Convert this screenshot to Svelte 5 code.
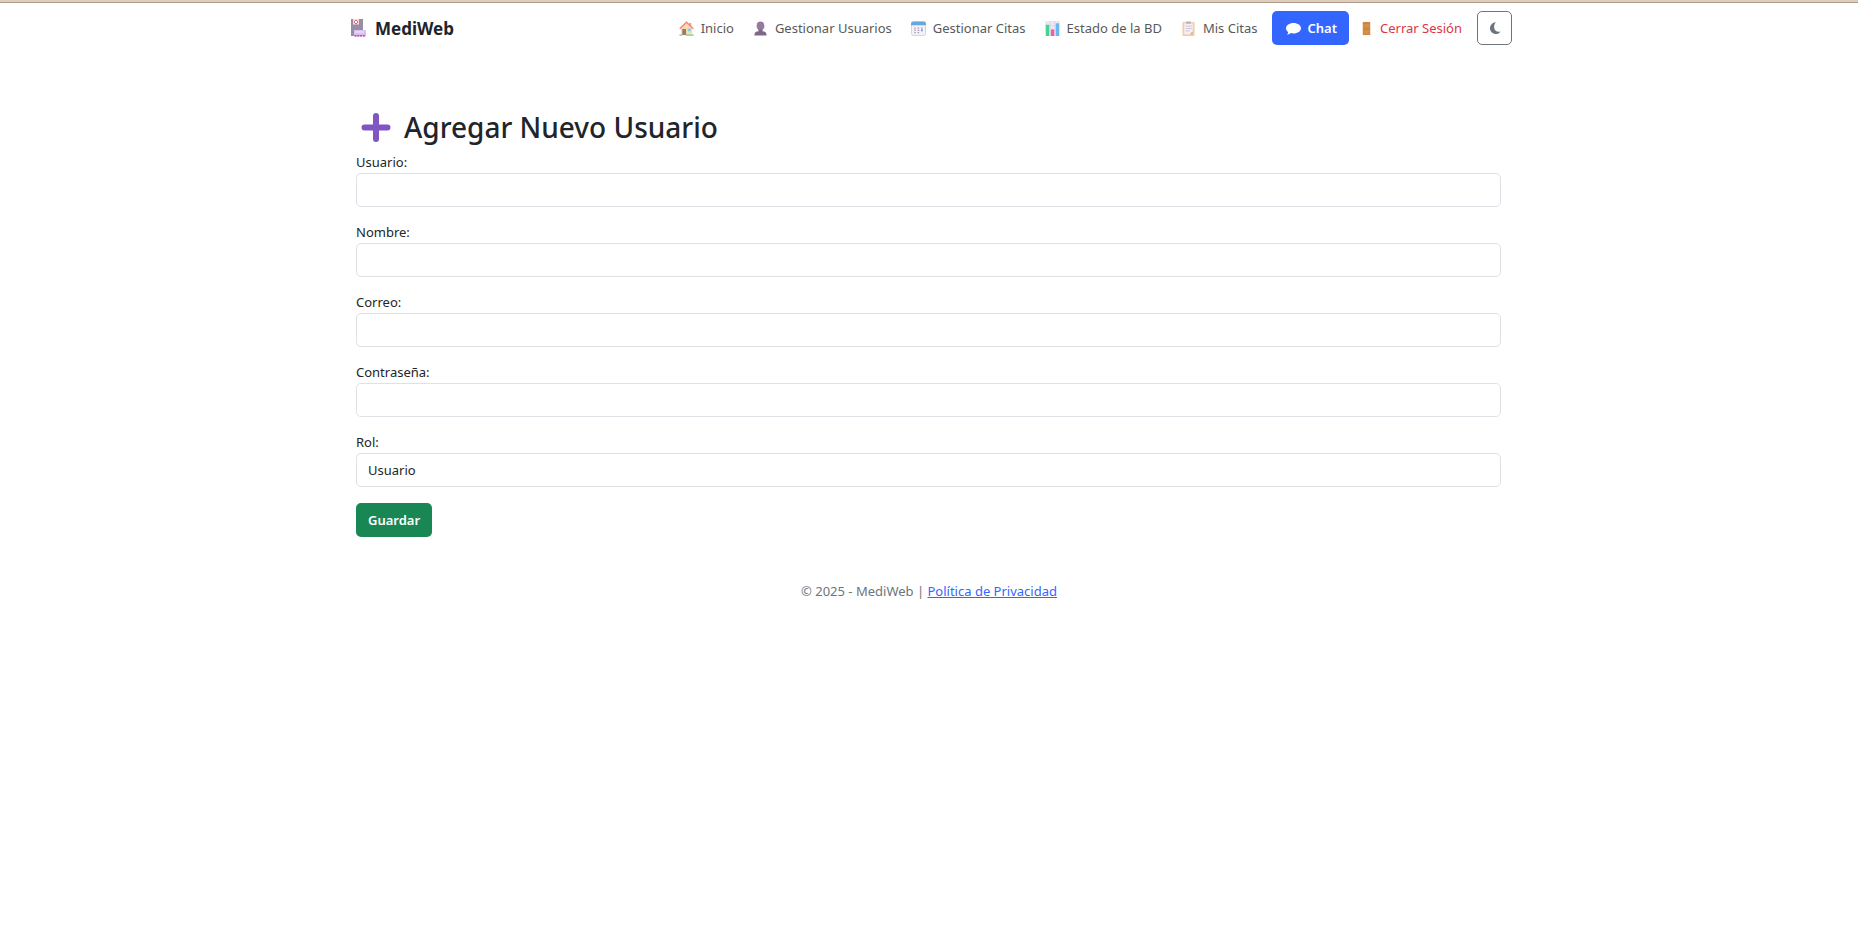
<script>
  let fields = [
    { id: 'usuario', label: 'Usuario:', type: 'text' },
    { id: 'nombre', label: 'Nombre:', type: 'text' },
    { id: 'correo', label: 'Correo:', type: 'email' },
    { id: 'contrasena', label: 'Contraseña:', type: 'password' }
  ];
</script>

<header>
  <nav class="bar">
    <a class="brand" href="#inicio">
      <svg class="icon" viewBox="0 0 16 18" aria-hidden="true">
        <rect x="1" y="0" width="12" height="17" fill="#998ca4" />
        <rect x="3" y="0" width="6" height="5.500" fill="#f3d9e0" />
        <path d="M6 1l2 2-2 2-2-2z" fill="#fff" stroke="#f0626c" stroke-width="1" />
        <rect x="4" y="11" width="12" height="6.500" rx=".5" fill="#d6c0ee" />
        <rect x="5" y="12" width="9" height="2" fill="#e6d6f5" />
        <path d="M4.500 16.800h10.500" stroke="#d33fa8" stroke-width="1.400" stroke-dasharray="2 .8" />
      </svg>
      MediWeb
    </a>
    <ul class="links">
      <li><a href="#inicio">
        <svg class="icon" viewBox="0 0 16 16" aria-hidden="true">
          <path d="M11 2h2v4h-2z" fill="#e0998a" />
          <path d="M2 7.500l6-6 6 6V15H2z" fill="#f8dcae" />
          <path d="M.8 8.300L8 1.400l7.200 6.900" fill="none" stroke="#f4847c" stroke-width="1.500" />
          <rect x="3.500" y="8.500" width="4" height="6.500" fill="#a07868" />
          <rect x="9.500" y="8" width="3" height="3" fill="#8dc9f0" />
          <path d="M.5 15h3M7.500 15h8" stroke="#84e2b4" stroke-width="1.800" />
        </svg>Inicio</a></li>
      <li><a href="#usuarios">
        <svg class="icon" viewBox="0 0 16 16" aria-hidden="true">
          <path d="M4 4.500a4 4 0 0 1 8 0V7l-2 3H6L4 7z" fill="#937a9e" />
          <path d="M6 9h4v2c3 0 4.500 1.500 4.500 4.500h-13C1.500 12.500 3 11 6 11z" fill="#7c6887" />
        </svg>Gestionar Usuarios</a></li>
      <li><a href="#citas">
        <svg class="icon" viewBox="0 0 16 16" aria-hidden="true">
          <rect x=".5" y="1" width="15" height="14.500" rx="2" fill="#f5f1f9" stroke="#d6cede" />
          <path d="M0 4.500V3a2.500 2.500 0 0 1 2.500-2.500h11A2.500 2.500 0 0 1 16 3v1.500z" fill="#64a8de" />
          <path d="M3.500 7.500h9M3.500 10h9M3.500 12.500h6" stroke="#a99bb8" stroke-width="1.300" stroke-dasharray="1.600 2" />
          <path d="M10.700 10h1.800" stroke="#559fe0" stroke-width="1.800" />
        </svg>Gestionar Citas</a></li>
      <li><a href="#estado">
        <svg class="icon" viewBox="0 0 16 16" aria-hidden="true">
          <rect width="16" height="16" rx="1.500" fill="#eee7f3" />
          <path d="M0 5h16M0 10h16M5.500 0v16M10.500 0v16" stroke="#ddd3e4" />
          <rect x="1" y="4" width="3.500" height="12" fill="#43d58e" />
          <rect x="6.300" y="9" width="3.500" height="7" fill="#f858a4" />
          <rect x="11.500" y="2.500" width="3.500" height="13.500" fill="#65b9ee" />
        </svg>Estado de la BD</a></li>
      <li><a href="#mis-citas">
        <svg class="icon" viewBox="0 0 16 16" aria-hidden="true">
          <rect x="1.500" y="1" width="13" height="15" rx="1" fill="#f1cfab" />
          <path d="M3.500 2.500h9V11l-3 3h-6z" fill="#f4f0f7" />
          <path d="M5.500 .5h5v2.500h-5z" fill="#b9b0c0" />
          <path d="M5 5.500h6.500M5 8h6.500M5 10.500h4.500" stroke="#ccc3d3" />
          <path d="M9.500 14l3-3v3z" fill="#dfb07f" />
        </svg>Mis Citas</a></li>
      <li><a class="chat" href="#chat">
        <svg class="icon" viewBox="0 0 16 16" aria-hidden="true">
          <path d="M8 2c4.400 0 8 2.500 8 5.600s-3.600 5.600-8 5.600c-1.100 0-2-.1-2.900-.4C4 14 2.400 14.600.8 14.600c1-.9 1.500-2 1.500-3C.8 10.600 0 9.200 0 7.600 0 4.500 3.600 2 8 2z" fill="#fff" />
        </svg>Chat</a></li>
      <li><a class="logout" href="#salir">
        <svg class="door" viewBox="0 0 9 16" aria-hidden="true">
          <rect x=".5" y="1" width="8" height="14" fill="#d08a43" />
          <path d="M2 3h5v4H2zM2 10h5v3H2z" fill="#d4914b" />
          <path d="M1 8.500h7M1 2.500h7" stroke="#c47f3a" stroke-width=".8" />
        </svg>Cerrar Sesión</a></li>
    </ul>
    <button class="theme" type="button" aria-label="Cambiar tema">
      <svg class="moon" viewBox="0 0 16 16" aria-hidden="true">
        <path d="M9 1.500A6.700 6.700 0 1 0 14.500 12C10 13 7 10.500 7 7c0-2.300.7-4.200 2-5.500z" fill="#6c757d" />
      </svg>
    </button>
  </nav>
</header>

<main>
  <h1>
    <svg class="plus" viewBox="0 0 40 40" aria-hidden="true">
      <path d="M20 9v23M8.500 20.500h23" stroke="#7e57c2" stroke-width="6" stroke-linecap="round" />
    </svg>
    Agregar Nuevo Usuario
  </h1>
  <form>
    {#each fields as field}
      <div class="field">
        <label for={field.id}>{field.label}</label>
        <input id={field.id} type={field.type} />
      </div>
    {/each}
    <div class="field">
      <label for="rol">Rol:</label>
      <select id="rol">
        <option>Usuario</option>
      </select>
    </div>
    <button class="save" type="submit">Guardar</button>
  </form>
</main>

<footer>© 2025 - MediWeb | <a href="#privacidad">Política de Privacidad</a></footer>

<style>
  :global(body) {
    background: #fff;
    color: #212529;
    font-family: "Noto Sans", "Open Sans", sans-serif;
    font-size: 13px;
    line-height: 21px;
  }
  header {
    border-top: 2px solid #dccdbc;
    box-shadow: inset 0 1px #b09c88;
  }
  .bar, main {
    box-sizing: border-box;
    max-width: 1166px;
    margin: 0 auto;
  }
  .bar {
    display: flex;
    align-items: center;
    justify-content: space-between;
    padding: 9px 0 9px 4px;
  }
  .brand {
    display: flex;
    align-items: center;
    gap: 9px;
    margin-right: auto;
    color: #212529;
    font-size: 17px;
    font-weight: 700;
    text-decoration: none;
  }
  .links {
    display: flex;
    align-items: center;
    gap: 19px;
    margin: 0 15px 0 0;
    padding: 0;
    list-style: none;
  }
  .links a {
    display: flex;
    align-items: center;
    gap: 7px;
    color: #595959;
    text-decoration: none;
    white-space: nowrap;
  }
  .icon {
    width: 15px;
    height: 15px;
    flex: none;
  }
  .brand .icon {
    width: 16px;
    height: 18px;
  }
  .links .chat {
    gap: 6px;
    margin: 0 -6px 0 -4px;
    padding: 7px 12px 6px 14px;
    border-radius: 5px;
    background: #3366ff;
    color: #fff;
    font-weight: 600;
  }
  .links .logout {
    gap: 9px;
    color: #dc3545;
  }
  .door {
    width: 9px;
    height: 15px;
  }
  .theme {
    display: flex;
    align-items: center;
    justify-content: center;
    width: 35px;
    height: 34px;
    padding: 0;
    border: 1px solid #6c757d;
    border-radius: 5px;
    background: transparent;
  }
  .moon {
    width: 14px;
    height: 14px;
  }
  main {
    padding: 56px 11px 0 10px;
  }
  h1 {
    display: flex;
    align-items: center;
    gap: 8px;
    margin: 0 0 8px;
    font-size: 28px;
    font-weight: 500;
    line-height: 34px;
  }
  .plus {
    width: 40px;
    height: 40px;
    margin: -3px 0;
  }
  .field {
    margin-bottom: 15px;
  }
  .field:last-of-type {
    margin-bottom: 16px;
  }
  label {
    display: block;
  }
  input, select {
    appearance: none;
    display: block;
    box-sizing: border-box;
    width: 100%;
    height: 34px;
    padding: 0 11px;
    border: 1px solid #dee2e6;
    border-radius: 5px;
    background: #fff;
    color: #212529;
    font: inherit;
  }
  .save {
    height: 34px;
    padding: 0 12px;
    border: 0;
    border-radius: 5px;
    background: #198754;
    color: #fff;
    font: inherit;
    font-weight: 600;
  }
  footer {
    padding: 44px 0;
    color: #6c757d;
    text-align: center;
  }
  footer a {
    color: #3366ff;
  }
</style>
